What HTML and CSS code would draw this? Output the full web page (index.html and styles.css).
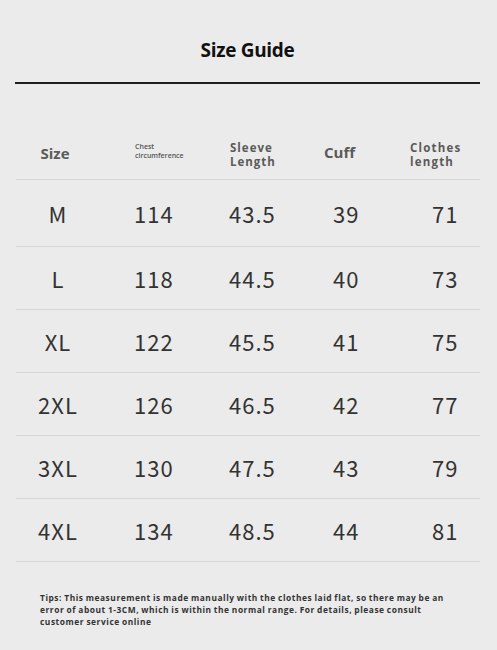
FILE: index.html
```html
<!DOCTYPE html>
<html>
<head>
<meta charset="utf-8">
<link rel="stylesheet" href="styles.css">
</head>
<body>
<div class="page">
  <h1 class="title">Size Guide</h1>
  <div class="rule"></div>
  <div class="table">
    <div class="row head">
      <div class="cell size h-size">Size</div>
      <div class="cell h-chest">Chest<br>circumference</div>
      <div class="cell h-sleeve">Sleeve<br>Length</div>
      <div class="cell h-cuff">Cuff</div>
      <div class="cell h-clothes">Clothes<br>length</div>
    </div>
    <div class="row data first">
      <div class="cell size">M</div><div class="cell">114</div><div class="cell">43.5</div><div class="cell">39</div><div class="cell">71</div>
    </div>
    <div class="row data">
      <div class="cell size">L</div><div class="cell">118</div><div class="cell">44.5</div><div class="cell">40</div><div class="cell">73</div>
    </div>
    <div class="row data">
      <div class="cell size">XL</div><div class="cell">122</div><div class="cell">45.5</div><div class="cell">41</div><div class="cell">75</div>
    </div>
    <div class="row data">
      <div class="cell size">2XL</div><div class="cell">126</div><div class="cell">46.5</div><div class="cell">42</div><div class="cell">77</div>
    </div>
    <div class="row data">
      <div class="cell size">3XL</div><div class="cell">130</div><div class="cell">47.5</div><div class="cell">43</div><div class="cell">79</div>
    </div>
    <div class="row data">
      <div class="cell size">4XL</div><div class="cell">134</div><div class="cell">48.5</div><div class="cell">44</div><div class="cell">81</div>
    </div>
  </div>
  <p class="tips">Tips: This measurement is made manually with the clothes laid flat, so there may be an error of about 1-3CM, which is within the normal range. For details, please consult customer service online</p>
</div>
</body>
</html>
```
FILE: styles.css
```css
html, body {
  margin: 0;
  padding: 0;
  background: #ebebeb;
}
.page {
  width: 497px;
  height: 650px;
  padding: 0 17px 0 15px;
  box-sizing: border-box;
  background: #ebebeb;
}
.title {
  margin: 0;
  padding-top: 38px;
  font-family: "Open Sans", "Liberation Sans", sans-serif;
  font-weight: 700;
  font-size: 19px;
  line-height: 24px;
  text-align: center;
  color: #111;
  letter-spacing: -0.3px;
}
.rule {
  margin-top: 20px;
  height: 2px;
  background: #1e1e1e;
}
.table {
  margin-top: 42px;
  padding-left: 1px;
}
.row {
  display: grid;
  grid-template-columns: 84px 95px 104px 99px 82px;
  align-items: center;
  border-bottom: 1px solid #d6d6d6;
}
.row.head {
  height: 53px;
  font-family: "Open Sans", "Liberation Sans", sans-serif;
  font-weight: 700;
  color: #5a5a5a;
}
.row.data {
  height: 62px;
  font-family: "Noto Sans CJK SC", "Noto Sans", sans-serif;
  font-size: 22px;
  color: #333;
  letter-spacing: 1px;
}
.row.data.first {
  height: 66px;
}
.cell {
  padding-left: 34px;
  white-space: nowrap;
}
.cell.size {
  padding-left: 0;
  text-align: center;
}
.h-size {
  font-size: 15px;
  padding-right: 6px;
}
.h-chest {
  font-size: 7px;
  line-height: 9px;
  font-weight: 600;
  padding-left: 35px;
  color: #555;
  margin-top: -3px;
}
.h-sleeve {
  font-size: 11.5px;
  line-height: 14px;
  letter-spacing: 1px;
  padding-left: 35px;
  margin-top: 4px;
}
.h-cuff {
  font-size: 15px;
  padding-left: 25px;
  margin-top: -2px;
}
.h-clothes {
  font-size: 11.5px;
  line-height: 14px;
  letter-spacing: 1.2px;
  padding-left: 12px;
  margin-top: 4px;
}
.tips {
  margin: 30px 0 0 25px;
  width: 412px;
  font-family: "Open Sans", "Liberation Sans", sans-serif;
  font-weight: 700;
  font-size: 8.4px;
  line-height: 12px;
  letter-spacing: 0.55px;
  word-spacing: -0.5px;
  color: #333;
}
```
